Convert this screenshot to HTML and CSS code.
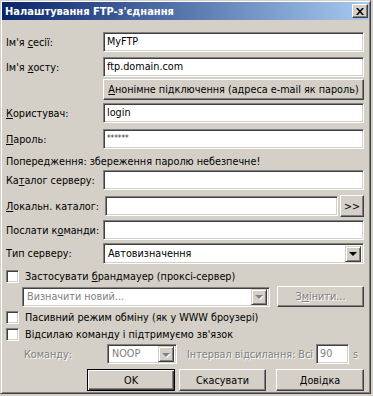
FILE: index.html
```html
<!DOCTYPE html>
<html lang="uk">
<head>
    <meta charset="UTF-8">
    <title>Налаштування FTP-з'єднання</title>
    <link rel="stylesheet" href="styles.css">
</head>
<body>
<div class="window">
    <div class="titlebar">
        <span class="title">Налаштування FTP-з'єднання</span>
        <span class="close">
            <svg width="8" height="7" viewBox="0 0 8 7"><path d="M0 0h2l2 2.5L6 0h2L5 3.5 8 7H6L4 4.5 2 7H0l3-3.5z" fill="#000"/></svg>
        </span>
    </div>

    <div class="content">
        <div class="row r-session">
            <span class="lbl">Ім'я <u>с</u>есії:</span>
            <div class="field grow">MyFTP</div>
        </div>
        <div class="row r-host">
            <span class="lbl">Ім'я <u>х</u>осту:</span>
            <div class="field grow">ftp.domain.com</div>
        </div>
        <div class="row r-anon">
            <span class="lbl"></span>
            <div class="btn grow"><u>А</u>нонімне підключення (адреса e-mail як пароль)</div>
        </div>
        <div class="row r-user">
            <span class="lbl"><u>К</u>ористувач:</span>
            <div class="field grow">login</div>
        </div>
        <div class="row r-pass">
            <span class="lbl"><u>П</u>ароль:</span>
            <div class="field grow"><span class="stars">******</span></div>
        </div>
        <div class="row r-warn">Попередження: збереження паролю небезпечне!</div>
        <div class="row r-srvdir">
            <span class="lbl">Ка<u>т</u>алог серверу:</span>
            <div class="field grow"></div>
        </div>
        <div class="row r-local">
            <span class="lbl"><u>Л</u>окальн. каталог:</span>
            <div class="field grow"></div>
            <div class="btn browse">&gt;&gt;</div>
        </div>
        <div class="row r-cmd">
            <span class="lbl">Послати к<u>о</u>манди:</span>
            <div class="field grow"></div>
        </div>
        <div class="row r-type">
            <span class="lbl">Тип серверу:</span>
            <div class="field combo grow">
                <span class="combo-text">Автовизначення</span>
                <span class="drop"><i class="tri"></i></span>
            </div>
        </div>
        <div class="row check r-fw">
            <span class="box"></span>
            <span>Застосувати <u>б</u>рандмауер (проксі-сервер)</span>
        </div>
        <div class="row r-proxy">
            <div class="field combo proxy-combo off">
                <span class="combo-text">Визначити новий...</span>
                <span class="drop"><i class="tri"></i></span>
            </div>
            <div class="btn change off">З<u>м</u>інити...</div>
        </div>
        <div class="row check r-passive">
            <span class="box"></span>
            <span>Пасивний режим обміну (як у WWW броузері)</span>
        </div>
        <div class="row check r-keep">
            <span class="box"></span>
            <span>Відсилаю команду і підтримуємо зв'язок</span>
        </div>
        <div class="row r-noop off">
            <span class="noop-lbl">Команду:</span>
            <div class="field combo noop">
                <span class="combo-text">NOOP</span>
                <span class="drop"><i class="tri"></i></span>
            </div>
            <span class="interval">Інтервал відсилання: Всі</span>
            <div class="field secs">90</div>
            <span class="unit">s</span>
        </div>
        <div class="row r-buttons">
            <div class="btn dlg default">OK</div>
            <div class="btn dlg cancel">Скасувати</div>
            <div class="btn dlg help">Довідка</div>
        </div>
    </div>
</div>
</body>
</html>
```

FILE: styles.css
```css
body {
    margin: 0;
    background: #d4d0c8;
    font-family: "DejaVu Sans Condensed", "DejaVu Sans", sans-serif;
    font-size: 10.75px;
    color: #000;
}

u {
    text-decoration: underline;
    text-underline-offset: 1px;
}

.window {
    box-sizing: border-box;
    width: 371px;
    height: 394px;
    padding: 1px;
    background: #d4d0c8;
    border: 1px solid;
    border-color: #d4d0c8 #404040 #404040 #d4d0c8;
    box-shadow: inset 1px 1px #fff, inset -1px -1px #808080;
    display: flex;
    flex-direction: column;
}

.titlebar {
    height: 18px;
    display: flex;
    align-items: center;
    justify-content: space-between;
    padding-left: 3px;
    background: linear-gradient(to right, #0a246a, #a6caf0);
}

.title {
    color: #fff;
    font-weight: bold;
    font-size: 11px;
}

.close {
    box-sizing: border-box;
    width: 16px;
    height: 14px;
    margin-right: 1px;
    display: flex;
    align-items: center;
    justify-content: center;
    background: #d4d0c8;
    border: 1px solid;
    border-color: #fff #404040 #404040 #fff;
    box-shadow: inset -1px -1px #808080;
}

.content {
    display: flex;
    flex-direction: column;
    padding: 0 5px 0 4px;
}

.row {
    display: flex;
    align-items: center;
}

.lbl {
    width: 97px;
    flex: none;
    white-space: nowrap;
}

.grow {
    flex: 1;
}

.field {
    box-sizing: border-box;
    height: 20px;
    line-height: 18px;
    padding: 0 3px;
    background: #fff;
    border: 1px solid;
    border-color: #808080 #fff #fff #808080;
    box-shadow: inset 1px 1px #404040, inset -1px -1px #d4d0c8;
    white-space: nowrap;
}

.stars {
    font-size: 8px;
    color: #333;
    vertical-align: top;
}

.btn {
    box-sizing: border-box;
    height: 21px;
    display: flex;
    align-items: center;
    justify-content: center;
    background: #d4d0c8;
    border: 1px solid;
    border-color: #fff #404040 #404040 #fff;
    box-shadow: inset -1px -1px #808080;
    white-space: nowrap;
}

.combo {
    display: flex;
    align-items: center;
    padding: 0 2px 0 4px;
}

.combo-text {
    flex: 1;
}

.drop {
    box-sizing: border-box;
    width: 16px;
    height: 16px;
    display: flex;
    align-items: center;
    justify-content: center;
    background: #d4d0c8;
    border: 1px solid;
    border-color: #d4d0c8 #404040 #404040 #d4d0c8;
    box-shadow: inset 1px 1px #fff, inset -1px -1px #808080;
}

.tri {
    width: 0;
    height: 0;
    border-left: 4px solid transparent;
    border-right: 4px solid transparent;
    border-top: 4px solid #000;
    margin-top: 1px;
}

/* disabled controls */
.off,
.off .combo-text {
    color: #808080;
    text-shadow: 1px 1px 0 #fff;
}

.off .tri {
    border-top-color: #808080;
    filter: drop-shadow(1px 1px 0 #fff);
}

.r-session { margin-top: 12px; }
.r-host { margin-top: 5px; }
.r-anon { margin-top: 2px; }
.r-user { margin-top: 3px; }
.r-pass { margin-top: 6px; }

.r-warn {
    margin-top: 5px;
    height: 14px;
}

.r-srvdir { margin-top: 2px; }

.r-local {
    margin-top: 5px;
    height: 22px;
    gap: 2px;
}

.browse {
    width: 24px;
    height: 22px;
}

.r-cmd { margin-top: 3px; }

.r-type { margin-top: 3px; }

.r-type .field {
    height: 21px;
}

.check {
    height: 13px;
    gap: 6px;
}

.box {
    box-sizing: border-box;
    width: 13px;
    height: 13px;
    background: #fff;
    border: 1px solid;
    border-color: #808080 #fff #fff #808080;
    box-shadow: inset 1px 1px #404040, inset -1px -1px #d4d0c8;
}

.r-fw { margin-top: 6px; }

.r-proxy {
    margin-top: 3px;
    padding-left: 16px;
    gap: 7px;
}

.proxy-combo {
    width: 248px;
}

.change {
    flex: 1;
}

.r-passive { margin-top: 4px; }
.r-keep { margin-top: 4px; }

.r-noop {
    margin-top: 3px;
    padding-left: 18px;
}

.noop-lbl {
    width: 83px;
}

.noop {
    width: 70px;
    margin-right: 10px;
}

.interval {
    flex: 1;
    white-space: nowrap;
}

.secs {
    width: 33px;
    margin-right: 4px;
}

.unit {
    width: 11px;
}

.r-buttons {
    margin-top: 5px;
    padding-left: 81px;
}

.dlg {
    height: 22px;
    width: 88px;
}

.default {
    border: 1px solid #000;
    box-shadow: inset 1px 1px #fff, inset -1px -1px #404040, inset -2px -2px #808080;
}

.cancel {
    width: 87px;
    margin-left: 4px;
}

.help {
    margin-left: 10px;
}
```
